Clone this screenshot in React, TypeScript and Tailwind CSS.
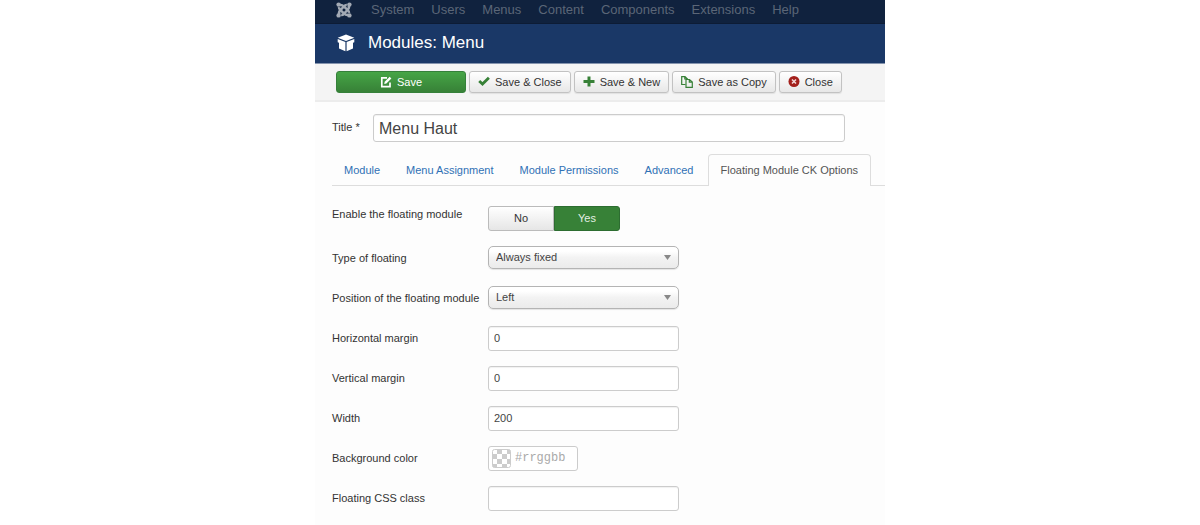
import React, { useState } from "react";

const menuItems = ["System", "Users", "Menus", "Content", "Components", "Extensions", "Help"];
const tabs = ["Module", "Menu Assignment", "Module Permissions", "Advanced", "Floating Module CK Options"];

function JoomlaIcon() {
  return (
    <svg viewBox="0 0 16 16" className="size-4 shrink-0" fill="none" stroke="#a3aab4" strokeWidth="2.5" aria-hidden="true">
      <path d="M3 5.2C2.8 7 4 7.6 5 8.6L8.200 11.600C9.400 12.800 11 13.300 12.600 12.800" />
      <path d="M13 10.800C13.200 9 12 8.400 11 7.400L7.800 4.400C6.600 3.200 5 2.700 3.400 3.200" />
      <path d="M5.200 13C7 13.200 7.600 12 8.600 11L11.600 7.800C12.800 6.600 13.300 5 12.800 3.400" />
      <path d="M10.800 3C9 2.800 8.400 4 7.400 5L4.400 8.200C3.200 9.400 2.700 11 3.200 12.600" />
      <g fill="#a3aab4" stroke="none">
        <circle cx="2.600" cy="2.600" r="2.200" />
        <circle cx="13.400" cy="2.600" r="2.200" />
        <circle cx="2.600" cy="13.400" r="2.200" />
        <circle cx="13.400" cy="13.400" r="2.200" />
      </g>
    </svg>
  );
}

function CubeIcon() {
  return (
    <svg viewBox="0 0 18 18" className="size-[18px] shrink-0" fill="#fff" aria-hidden="true">
      <path d="M9 .5 17.300 3.700 9 7 .7 3.700Z" />
      <path d="M.7 5 8.400 8.100V17.300L2 14.500V8.700L.7 8.200Z" />
      <path d="M17.300 5 9.600 8.100V17.300L16 14.500V8.700L17.300 8.200Z" />
    </svg>
  );
}

function EditIcon() {
  return (
    <svg viewBox="0 0 12 12" className="size-3 shrink-0" fill="none" aria-hidden="true">
      <path d="M7 1.800H1.800V10.600H10V6.500" stroke="#fff" strokeWidth="1.700" />
      <path d="M4.200 8 4.700 5.800 9.700.8 11.400 2.500 6.400 7.500Z" fill="#fff" />
    </svg>
  );
}

function CheckIcon() {
  return (
    <svg viewBox="0 0 12 12" className="size-3 shrink-0" fill="none" stroke="#378137" strokeWidth="2.800" aria-hidden="true">
      <path d="M1.200 5 4.500 8.100 10.900 1.700" />
    </svg>
  );
}

function PlusIcon() {
  return (
    <svg viewBox="0 0 12 12" className="size-3 shrink-0" fill="#378137" aria-hidden="true">
      <path d="M4.500 .5H7.500V4H11.500V7H7.500V10.500H4.500V7H.5V4H4.500Z" />
    </svg>
  );
}

function CopyIcon() {
  return (
    <svg viewBox="0 0 12 12" className="size-3 shrink-0" fill="none" stroke="#378137" strokeWidth="1.200" aria-hidden="true">
      <path d="M4.500 8.500H.7V.7H4L6.500 3V3.500M3.800.7V3H6.500" />
      <path d="M5 3.500H8.500L11.300 6V11.300H5ZM8.300 3.500V6.200H11.300" />
    </svg>
  );
}

function CancelIcon() {
  return (
    <svg viewBox="0 0 12 12" className="size-3 shrink-0" aria-hidden="true">
      <circle cx="6" cy="5.500" r="5.500" fill="#a3201c" />
      <path d="M4 3.500 8 7.500M8 3.500 4 7.500" stroke="#f3dcdc" strokeWidth="1.500" />
    </svg>
  );
}

function ToolButton({ icon, children }: { icon: React.ReactNode; children: React.ReactNode }) {
  return (
    <button
      type="button"
      className="flex h-[22px] items-center gap-[5px] rounded-[3px] border border-[#c2c2c2] bg-linear-to-b from-white to-[#e7e7e7] px-2 whitespace-nowrap shadow-[0_1px_1px_rgba(0,0,0,0.08)]"
    >
      {icon}
      {children}
    </button>
  );
}

function Row({ label, htmlFor, children }: { label: string; htmlFor: string; children: React.ReactNode }) {
  return (
    <div className="flex h-10 items-center">
      <label htmlFor={htmlFor} className="w-[156px] shrink-0 whitespace-nowrap">
        {label}
      </label>
      {children}
    </div>
  );
}

function TextRow({ label, id, value }: { label: string; id: string; value: string }) {
  return (
    <Row label={label} htmlFor={id}>
      <input
        id={id}
        type="text"
        defaultValue={value}
        className="h-[25px] w-[191px] rounded-[3px] border border-[#ccc] bg-white px-[5px] text-[#444] shadow-[inset_0_1px_1px_rgba(0,0,0,0.06)]"
      />
    </Row>
  );
}

function SelectRow({ label, id, options }: { label: string; id: string; options: string[] }) {
  return (
    <Row label={label} htmlFor={id}>
      <div className="mb-0.5 grid items-center">
        <select
          id={id}
          className="col-start-1 row-start-1 h-[23px] w-[191px] appearance-none rounded-[5px] border border-[#b4b4b4] bg-linear-to-b from-white from-20% via-[#f3f3f3] via-50% to-[#ebebeb] px-[7px] text-[#444] shadow-[0_1px_1px_rgba(0,0,0,0.1)]"
        >
          {options.map((o) => (
            <option key={o}>{o}</option>
          ))}
        </select>
        <svg viewBox="0 0 7 5" className="pointer-events-none col-start-1 row-start-1 mr-2 h-[5px] w-[7px] justify-self-end" fill="#888" aria-hidden="true">
          <path d="M0 0H7L3.500 5Z" />
        </svg>
      </div>
    </Row>
  );
}

export default function App() {
  const [enabled, setEnabled] = useState(true);
  const [active, setActive] = useState(4);

  return (
    <div className="min-h-screen bg-white font-['Liberation_Sans',Arial,sans-serif] text-[11px] leading-4 text-[#333]">
      <div className="mx-auto min-h-screen max-w-[570px] bg-[#fdfdfd]">
        <nav className="flex h-6 items-center border-b border-[#0d1c35] bg-[#10223e] pb-1 pl-[21px]">
          <a href="#home" aria-label="Joomla">
            <JoomlaIcon />
          </a>
          <ul className="ml-[19px] flex gap-[17px] text-[13px] text-[#5b6677]">
            {menuItems.map((item) => (
              <li key={item}>
                <a href={"#" + item.toLowerCase()}>{item}</a>
              </li>
            ))}
          </ul>
        </nav>

        <header className="flex h-10 items-center gap-[13px] border-b border-[#8493ad] bg-[#1a3867] pb-0.5 pl-[22px] text-white">
          <CubeIcon />
          <h1 className="text-[17px] leading-5">Modules: Menu</h1>
        </header>

        <div className="flex h-[38px] items-center gap-[3px] border-b-2 border-[#ececec] bg-[#f4f4f4] pl-[21px]">
          <button
            type="button"
            className="flex h-[22px] w-[130px] items-center justify-center gap-[5px] rounded-[3px] border border-[#35803a] bg-linear-to-b from-[#46a546] to-[#378137] text-white"
          >
            <EditIcon />
            Save
          </button>
          <ToolButton icon={<CheckIcon />}>Save &amp; Close</ToolButton>
          <ToolButton icon={<PlusIcon />}>Save &amp; New</ToolButton>
          <ToolButton icon={<CopyIcon />}>Save as Copy</ToolButton>
          <ToolButton icon={<CancelIcon />}>Close</ToolButton>
        </div>

        <main className="pl-[17px]">
          <div className="flex items-center pt-3 pr-10">
            <label htmlFor="title" className="w-[41px] shrink-0 pb-0.5">
              Title *
            </label>
            <input
              id="title"
              type="text"
              defaultValue="Menu Haut"
              className="h-7 min-w-0 flex-1 rounded-[3px] border border-[#ccc] bg-white px-[5px] pt-0.5 text-[16px] text-[#444] shadow-[inset_0_1px_1px_rgba(0,0,0,0.06)]"
            />
          </div>

          <div role="tablist" className="mt-3 flex h-8 border-b border-[#ddd]">
            {tabs.map((tab, i) => (
              <button
                key={tab}
                type="button"
                role="tab"
                aria-selected={i === active}
                onClick={() => setActive(i)}
                className={
                  i === active
                    ? "-mb-px rounded-t-[4px] border border-b-0 border-[#ddd] bg-[#fdfdfd] px-3 pb-px whitespace-nowrap text-[#555]"
                    : "mr-[2px] px-3 whitespace-nowrap text-[#3071b5]"
                }
              >
                {tab}
              </button>
            ))}
          </div>

          <form className="pt-3" onSubmit={(e) => e.preventDefault()}>
            <div className="flex h-10 items-center">
              <span id="enable" className="w-[156px] shrink-0 pb-2 whitespace-nowrap">
                Enable the floating module
              </span>
              <div role="group" aria-labelledby="enable" className="flex h-[25px] w-[132px]">
                {[false, true].map((v) => (
                  <button
                    key={String(v)}
                    type="button"
                    aria-pressed={enabled === v}
                    onClick={() => setEnabled(v)}
                    className={
                      (v ? "rounded-r-[3px] " : "rounded-l-[3px] ") +
                      (enabled === v
                        ? "flex-1 border border-[#2d6d31] bg-[#378137] text-[#e4f0e4]"
                        : "flex-1 border border-[#bbb] bg-linear-to-b from-white to-[#e6e6e6] text-[#333]")
                    }
                  >
                    {v ? "Yes" : "No"}
                  </button>
                ))}
              </div>
            </div>
            <SelectRow label="Type of floating" id="type" options={["Always fixed"]} />
            <SelectRow label="Position of the floating module" id="position" options={["Left", "Right"]} />
            <TextRow label="Horizontal margin" id="hmargin" value="0" />
            <TextRow label="Vertical margin" id="vmargin" value="0" />
            <TextRow label="Width" id="width" value="200" />
            <Row label="Background color" htmlFor="bgcolor">
              <div className="flex h-[25px] w-[90px] items-center gap-1 rounded-[3px] border border-[#ccc] bg-white pl-[3px]">
                <svg viewBox="0 0 19 19" className="size-[19px] shrink-0" aria-hidden="true">
                  <defs>
                    <pattern id="checker" width="10" height="10" patternUnits="userSpaceOnUse">
                      <path d="M5 0H10V5H5ZM0 5H5V10H0Z" fill="#ccc" />
                    </pattern>
                  </defs>
                  <rect x=".5" y=".5" width="18" height="18" rx="2" fill="url(#checker)" stroke="#ccc" />
                </svg>
                <input
                  id="bgcolor"
                  type="text"
                  placeholder="#rrggbb"
                  className="w-full min-w-0 bg-transparent font-['Liberation_Mono',monospace] text-[12px] placeholder:text-[#aaa]"
                />
              </div>
            </Row>
            <TextRow label="Floating CSS class" id="cssclass" value="" />
          </form>
        </main>
      </div>
    </div>
  );
}
